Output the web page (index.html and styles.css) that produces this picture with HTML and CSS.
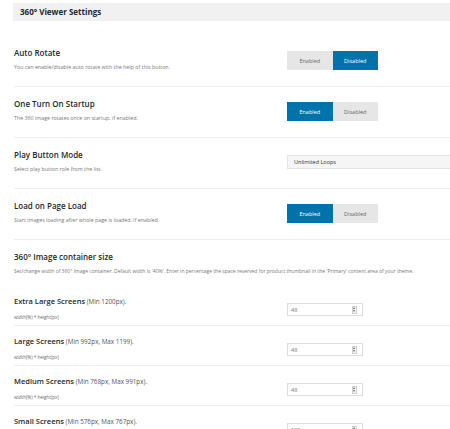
FILE: index.html
```html
<!DOCTYPE html>
<html>
<head>
<meta charset="utf-8">
<link rel="stylesheet" href="styles.css">
</head>
<body>
<div class="page">
  <div class="section-head">360° Viewer Settings</div>

  <div class="row">
    <div class="label">
      <div class="title">Auto Rotate</div>
      <div class="desc">You can enable/disable auto rotate with the help of this button.</div>
    </div>
    <div class="control">
      <div class="toggle"><span class="opt">Enabled</span><span class="opt on">Disabled</span></div>
    </div>
  </div>

  <div class="row">
    <div class="label">
      <div class="title">One Turn On Startup</div>
      <div class="desc">The 360 image rotates once on startup, if enabled.</div>
    </div>
    <div class="control">
      <div class="toggle"><span class="opt on">Enabled</span><span class="opt">Disabled</span></div>
    </div>
  </div>

  <div class="row">
    <div class="label">
      <div class="title">Play Button Mode</div>
      <div class="desc">Select play button role from the list.</div>
    </div>
    <div class="control">
      <div class="select">Unlimited Loops</div>
    </div>
  </div>

  <div class="row">
    <div class="label">
      <div class="title">Load on Page Load</div>
      <div class="desc">Start images loading after whole page is loaded, if enabled.</div>
    </div>
    <div class="control">
      <div class="toggle"><span class="opt on">Enabled</span><span class="opt">Disabled</span></div>
    </div>
  </div>

  <div class="group-head">
    <div class="title">360° Image container size</div>
    <div class="desc long">Set/change width of 360° Image container. Default width is '40%'. Enter in percentage the space reserved for product thumbnail in the 'Primary' content area of your theme.</div>
  </div>

  <div class="subrow">
    <div class="label">
      <div class="subtitle"><b>Extra Large Screens</b> (Min 1200px).</div>
      <div class="hint">width(%) * height(px)</div>
    </div>
    <div class="control">
      <div class="num"><span>48</span><i class="spin"></i></div>
    </div>
  </div>

  <div class="subrow">
    <div class="label">
      <div class="subtitle"><b>Large Screens</b> (Min 992px, Max 1199).</div>
      <div class="hint">width(%) * height(px)</div>
    </div>
    <div class="control">
      <div class="num"><span>48</span><i class="spin"></i></div>
    </div>
  </div>

  <div class="subrow">
    <div class="label">
      <div class="subtitle"><b>Medium Screens</b> (Min 768px, Max 991px).</div>
      <div class="hint">width(%) * height(px)</div>
    </div>
    <div class="control">
      <div class="num"><span>48</span><i class="spin"></i></div>
    </div>
  </div>

  <div class="subrow">
    <div class="label">
      <div class="subtitle"><b>Small Screens</b> (Min 576px, Max 767px).</div>
      <div class="hint">width(%) * height(px)</div>
    </div>
    <div class="control">
      <div class="num"><span>100</span><i class="spin"></i></div>
    </div>
  </div>
</div>
</body>
</html>
```

FILE: styles.css
```css
html, body {
  margin: 0;
  padding: 0;
  background: #fff;
  overflow: hidden;
}
body {
  font-family: "Open Sans", "Noto Sans", sans-serif;
  color: #23282d;
}
.page {
  width: 500px;
  padding: 3px 0 0 13px;
}
.section-head {
  background: #f1f1f1;
  height: 18px;
  line-height: 18px;
  padding-left: 7px;
  font-size: 8px;
  font-weight: 700;
  margin-bottom: 15px;
}
.row {
  display: grid;
  grid-template-columns: 273px 1fr;
  align-items: center;
  margin-left: 1px;
  padding: 12px 0 15px;
  border-bottom: 1px solid #eeeeee;
}
.title {
  font-size: 8px;
  font-weight: 600;
  line-height: 10px;
  color: #23282d;
}
.desc {
  font-size: 5.3px;
  line-height: 8px;
  margin-top: 5px;
  color: #777;
  white-space: nowrap;
}
.desc.long {
  font-size: 5px;
}
.control {
  display: flex;
  align-items: center;
}
.toggle {
  display: flex;
  height: 19px;
  margin-top: 2px;
}
.opt {
  width: 45.5px;
  background: #e6e6e6;
  color: #666;
  font-size: 5.5px;
  display: flex;
  align-items: center;
  justify-content: center;
}
.opt.on {
  background: #0073aa;
  color: #fff;
}
.select {
  width: 200px;
  height: 12px;
  line-height: 12px;
  border: 1px solid #e4e4e4;
  background: #f5f5f5;
  padding-left: 6px;
  font-size: 5.5px;
  color: #333;
  margin-top: 1px;
}
.group-head {
  margin-left: 1px;
  padding: 12px 0 11px;
}
.subrow {
  display: grid;
  grid-template-columns: 273px 1fr;
  align-items: center;
  margin-left: 1px;
  padding: 10px 0 4px;
  border-bottom: 1px solid #eeeeee;
}
.subtitle {
  font-size: 6.3px;
  line-height: 10px;
  color: #555;
}
.subtitle b {
  font-size: 7.5px;
  font-weight: 600;
  color: #23282d;
}
.hint {
  font-size: 4.6px;
  line-height: 8px;
  margin-top: 6px;
  color: #666;
}
.num {
  width: 66px;
  height: 11px;
  border: 1px solid #dddddd;
  display: flex;
  align-items: center;
  justify-content: space-between;
  padding: 0 5px 0 3px;
  box-sizing: content-box;
  font-size: 5.5px;
  color: #777;
  margin-top: 2px;
}
.spin {
  width: 5px;
  height: 8px;
  border: 1px solid #d0d0d0;
  background: #f2f2f2;
  position: relative;
  box-sizing: border-box;
}
.spin::before, .spin::after {
  content: "";
  position: absolute;
  left: 0px;
  border-left: 1.5px solid transparent;
  border-right: 1.5px solid transparent;
}
.spin::before {
  top: 0.5px;
  border-bottom: 2px solid #666;
}
.spin::after {
  bottom: 0.5px;
  border-top: 2px solid #666;
}
```
